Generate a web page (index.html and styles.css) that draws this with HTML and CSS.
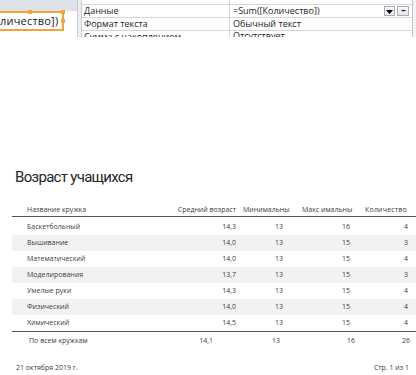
FILE: index.html
```html
<!DOCTYPE html>
<html lang="ru">
<head>
<meta charset="utf-8">
<title>Возраст учащихся</title>
<link rel="stylesheet" href="styles.css">
</head>
<body>
<div class="top">
  <div class="designer">
    <div class="band"></div>
    <div class="field">
      <span class="field-text">личество])</span>
      <i class="handle h-top"></i>
      <i class="handle h-corner"></i>
      <i class="handle h-right"></i>
    </div>
  </div>
  <div class="splitter"></div>
  <div class="props">
    <div class="prow partial"><div class="plabel"></div><div class="pvalue"></div></div>
    <div class="prow">
      <div class="plabel">Данные</div>
      <div class="pvalue">
        <span class="pv-text">=Sum([Количество])</span>
        <span class="btn btn-drop"><svg width="7" height="5" viewBox="0 0 7 5"><path d="M0 1h7L3.5 5z" fill="#000"/></svg></span>
        <span class="btn btn-dots">&middot;&middot;&middot;</span>
      </div>
    </div>
    <div class="prow"><div class="plabel">Формат текста</div><div class="pvalue"><span class="pv-text">Обычный текст</span></div></div>
    <div class="prow last"><div class="plabel">Сумма с накоплением</div><div class="pvalue"><span class="pv-text">Отсутствует</span></div></div>
  </div>
  <div class="scroll"></div>
</div>

<div class="report">
  <h1 class="title">Возраст учащихся</h1>
  <div class="grid head">
    <div class="c1">Название кружка</div>
    <div class="c2">Средний возраст</div>
    <div class="c3">Минимальны</div>
    <div class="c4">Макс имальны</div>
    <div class="c5">Количество</div>
  </div>
  <div class="body">
    <div class="grid row"><div class="c1">Баскетбольный</div><div class="c2">14,3</div><div class="c3">13</div><div class="c4">16</div><div class="c5">4</div></div>
    <div class="grid row alt"><div class="c1">Вышивание</div><div class="c2">14,0</div><div class="c3">13</div><div class="c4">15</div><div class="c5">3</div></div>
    <div class="grid row"><div class="c1">Математический</div><div class="c2">14,0</div><div class="c3">13</div><div class="c4">15</div><div class="c5">4</div></div>
    <div class="grid row alt"><div class="c1">Моделирования</div><div class="c2">13,7</div><div class="c3">13</div><div class="c4">15</div><div class="c5">3</div></div>
    <div class="grid row"><div class="c1">Умелые руки</div><div class="c2">14,3</div><div class="c3">13</div><div class="c4">15</div><div class="c5">4</div></div>
    <div class="grid row alt"><div class="c1">Физический</div><div class="c2">14,0</div><div class="c3">13</div><div class="c4">15</div><div class="c5">4</div></div>
    <div class="grid row"><div class="c1">Химический</div><div class="c2">14,5</div><div class="c3">13</div><div class="c4">15</div><div class="c5">4</div></div>
  </div>
  <div class="grid total">
    <div class="c1">По всем кружкам</div>
    <div class="c2">14,1</div>
    <div class="c3">13</div>
    <div class="c4">16</div>
    <div class="c5">26</div>
  </div>
  <div class="footer">
    <span>21 октября 2019 г.</span>
    <span>Стр. 1 из 1</span>
  </div>
</div>
</body>
</html>
```
FILE: styles.css
```css
html, body {
  margin: 0;
  padding: 0;
  background: #fff;
}
body {
  width: 416px;
  height: 375px;
  overflow: hidden;
  font-family: "Open Sans", "Noto Sans", sans-serif;
}

/* top designer / property sheet strip */
.top {
  display: flex;
  height: 37px;
  overflow: hidden;
}
.designer {
  width: 77px;
  display: flex;
  flex-direction: column;
  background: #fff;
}
.band {
  height: 11px;
  background: #dfe2e8;
}
.field {
  position: relative;
  width: 62px;
  height: 16px;
  border: 2px solid #f2a33a;
  border-left: none;
  background: #fff;
  display: flex;
  align-items: center;
  overflow: visible;
}
.field-text {
  font-size: 11px;
  color: #222;
  line-height: 16px;
  white-space: nowrap;
  letter-spacing: 0.2px;
}
.handle {
  position: absolute;
  width: 4px;
  height: 4px;
  background: #f2a33a;
}
.h-top { top: -3px; left: 28px; }
.h-corner { top: -3px; right: -3px; }
.h-right { top: 6px; right: -3px; }

.splitter {
  width: 5px;
  background: #eceef1;
  border-left: 1px solid #c8cbd0;
  border-right: 1px solid #c8cbd0;
  box-sizing: border-box;
}
.props {
  width: 330px;
  display: flex;
  flex-direction: column;
  background: #fff;
}
.prow {
  display: flex;
  height: 12px;
  border-bottom: 1px solid #d6d6d6;
  flex: none;
}
.prow.partial { height: 4px; }
.prow.last { height: 10px; overflow: hidden; }
.plabel {
  width: 145px;
  padding-left: 2px;
  border-right: 1px solid #d6d6d6;
  font-size: 9px;
  line-height: 12px;
  color: #1e1e1e;
  white-space: nowrap;
}
.pvalue {
  flex: 1;
  display: flex;
  align-items: center;
  padding-left: 3px;
  font-size: 9px;
  line-height: 12px;
  color: #1e1e1e;
  white-space: nowrap;
}
.pv-text { flex: 1; }
.btn {
  width: 11px;
  height: 10px;
  border: 1px solid #a9acb2;
  background: linear-gradient(#fafafa, #e4e6ea);
  display: flex;
  align-items: center;
  justify-content: center;
  margin-right: 2px;
  font-size: 8px;
  line-height: 8px;
  color: #000;
  box-sizing: border-box;
}
.btn-dots { width: 12px; letter-spacing: -1px; font-weight: bold; margin-right: 3px; }
.scroll {
  flex: 1;
  border-left: 1px solid #bfc3c9;
  background: #f3f4f6;
}

/* report */
.report {
  padding-left: 12px;
  margin-top: 130px;
  color: #404040;
}
.title {
  margin: 0 0 0 3px;
  font-family: Roboto, "Open Sans", sans-serif;
  font-weight: normal;
  font-size: 15px;
  line-height: 20px;
  color: #262626;
  letter-spacing: -0.7px;
}
.grid {
  display: grid;
  grid-template-columns: 148px 78px 57px 65px 56px;
  font-size: 7px;
  white-space: nowrap;
}
.head {
  margin-top: 16px;
  height: 13px;
  line-height: 13px;
  border-bottom: 1px solid #555;
}
.head .c1 { padding-left: 15px; }
.head .c2 { text-align: right; padding-right: 2px; }
.head .c3 { padding-left: 5px; }
.head .c4 { padding-left: 7px; }
.head .c5 { padding-left: 5px; letter-spacing: 0.2px; }
.body { padding-top: 2px; }
.row {
  height: 16px;
  line-height: 16px;
}
.row.alt { background: #f2f2f2; }
.row .c1, .total .c1 { padding-left: 15px; }
.row .c2 { text-align: right; padding-right: 2px; }
.row .c3 { text-align: right; padding-right: 12px; }
.row .c4 { text-align: right; padding-right: 10px; }
.row .c5 { text-align: right; padding-right: 8px; }
.total {
  border-top: 1px solid #555;
  height: 18px;
  line-height: 18px;
}
.total .c1 { padding-left: 17px; }
.total .c2 { text-align: right; padding-right: 25px; }
.total .c3 { text-align: right; padding-right: 15px; }
.total .c4 { text-align: right; padding-right: 5px; }
.total .c5 { text-align: right; padding-right: 6px; }
.footer {
  display: flex;
  justify-content: space-between;
  padding: 0 7px 0 4px;
  margin-top: 12px;
  font-size: 7px;
  line-height: 12px;
}
```
